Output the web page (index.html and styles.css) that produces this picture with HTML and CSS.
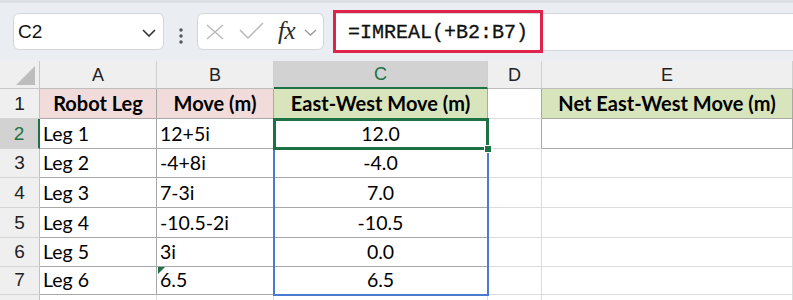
FILE: index.html
```html
<!DOCTYPE html>
<html>
<head>
<meta charset="utf-8">
<link rel="stylesheet" href="styles.css">
</head>
<body>
<div class="toolbar">
  <div class="namebox">
    <span class="name">C2</span>
    <svg class="chev" width="14" height="8" viewBox="0 0 14 8"><polyline points="1,1 7,7 13,1" fill="none" stroke="#333" stroke-width="1.6"/></svg>
  </div>
  <svg class="dots" width="6" height="16" viewBox="0 0 6 16"><circle cx="3" cy="2" r="1.7" fill="#555"/><circle cx="3" cy="8" r="1.7" fill="#555"/><circle cx="3" cy="14" r="1.7" fill="#555"/></svg>
  <div class="fxbox">
    <svg class="xicon" width="18" height="16" viewBox="0 0 18 16"><path d="M1 1 L17 15 M17 1 L1 15" stroke="#b9b9b9" stroke-width="1.5" fill="none"/></svg>
    <svg class="check" width="25" height="17" viewBox="0 0 25 17"><polyline points="1,8 9,16 24,1" fill="none" stroke="#b9b9b9" stroke-width="1.5"/></svg>
    <span class="fx">fx</span>
    <svg class="chev2" width="13" height="7" viewBox="0 0 13 7"><polyline points="1,1 6.5,6 12,1" fill="none" stroke="#9a9a9a" stroke-width="1.4"/></svg>
  </div>
  <div class="formula">
    <span class="ftext">=IMREAL(+B2:B7)</span>
    <div class="redbox"></div>
  </div>
</div>
<div class="sheet">
  <div class="grid">
    <div class="c corner"><svg width="20" height="19" viewBox="0 0 20 19"><polygon points="19,0 19,19 0,19" fill="#bdbdbd"/></svg></div>
    <div class="c ch">A</div>
    <div class="c ch">B</div>
    <div class="c ch sel">C</div>
    <div class="c ch">D</div>
    <div class="c ch">E</div>

    <div class="c rh">1</div>
    <div class="c t pink b">Robot Leg</div>
    <div class="c t pink b">Move (m)</div>
    <div class="c t green b">East-West Move (m)</div>
    <div class="c dr"></div>
    <div class="c t green b">Net East-West Move (m)</div>

    <div class="c rh rsel">2</div>
    <div class="c t">Leg 1</div>
    <div class="c t">12+5i</div>
    <div class="c t ctr">12.0</div>
    <div class="c dr"></div>
    <div class="c t"></div>

    <div class="c rh">3</div>
    <div class="c t">Leg 2</div>
    <div class="c t">-4+8i</div>
    <div class="c t ctr">-4.0</div>
    <div class="c"></div>
    <div class="c"></div>

    <div class="c rh">4</div>
    <div class="c t">Leg 3</div>
    <div class="c t">7-3i</div>
    <div class="c t ctr">7.0</div>
    <div class="c"></div>
    <div class="c"></div>

    <div class="c rh">5</div>
    <div class="c t">Leg 4</div>
    <div class="c t">-10.5-2i</div>
    <div class="c t ctr">-10.5</div>
    <div class="c"></div>
    <div class="c"></div>

    <div class="c rh">6</div>
    <div class="c t">Leg 5</div>
    <div class="c t">3i</div>
    <div class="c t ctr">0.0</div>
    <div class="c"></div>
    <div class="c"></div>

    <div class="c rh">7</div>
    <div class="c t">Leg 6</div>
    <div class="c t warn">6.5<span class="tri"></span></div>
    <div class="c t ctr">6.5</div>
    <div class="c"></div>
    <div class="c"></div>

    <div class="c rh"></div>
    <div class="c"></div>
    <div class="c"></div>
    <div class="c"></div>
    <div class="c"></div>
    <div class="c"></div>
  </div>
  <div class="range"></div>
  <div class="active"><span class="handle"></span></div>
</div>
</body>
</html>
```
FILE: styles.css
```css
* { box-sizing: border-box; }
html, body { margin: 0; padding: 0; }
body { width: 793px; height: 300px; overflow: hidden; background: #fff; font-family: Lato, "Noto Sans", sans-serif; }

.toolbar {
  height: 61px;
  background: #eaeef2;
  border-top: 3px solid #dde1e5;
  display: flex;
  align-items: flex-start;
  position: relative;
}
.namebox {
  margin: 10px 0 0 13px;
  width: 151px; height: 37px;
  background: #fff;
  border: 1px solid #d3d6da;
  border-radius: 6px;
  display: flex; align-items: center; justify-content: space-between;
  padding: 0 7px 0 4px;
}
.name { font-family: "Liberation Sans", Arial, sans-serif; font-size: 19px; color: #111; }
.chev { margin-top: 2px; }
.dots { margin: 25px 0 0 14px; }
.fxbox {
  margin: 10px 0 0 13px;
  width: 127px; height: 37px;
  background: #fff;
  border: 1px solid #d3d6da;
  border-radius: 6px;
  display: flex; align-items: center;
  padding-left: 8px;
}
.xicon { margin-top: 1px; }
.check { margin-left: 15px; margin-top: -2px; }
.fx { font-family: "Liberation Serif", "Times New Roman", serif; font-style: italic; font-size: 25px; color: #2a2a2a; margin-left: 14px; margin-top: -2px; letter-spacing: -0.5px; }
.chev2 { margin-left: 9px; margin-top: 1px; }
.formula {
  margin: 10px 0 0 9px;
  flex: 1;
  height: 38px;
  background: #fff;
  border-top: 1px solid #d3d6da;
  border-bottom: 1px solid #d3d6da;
  display: flex; align-items: center;
  padding-left: 15px;
  position: relative;
}
.ftext { font-family: "Liberation Mono", "DejaVu Sans Mono", monospace; font-size: 20px; color: #111; -webkit-text-stroke: 0.3px #111; }
.redbox {
  position: absolute;
  left: 0; top: -4px;
  width: 210px; height: 43px;
  border: 3px solid #e0234d;
}

.sheet { position: relative; }
.grid {
  display: grid;
  grid-template-columns: 40px 117px 117px 214px 54px 1fr;
  grid-template-rows: 28px 30px 30px 29px 30px 30px 29px 28px 30px;
}
.c {
  border-right: 1px solid #dcdcdc;
  border-bottom: 1px solid #dcdcdc;
  font-size: 19.5px;
  color: #000;
  display: flex; align-items: flex-end;
  padding: 0 0 3px 3px;
  white-space: nowrap;
  position: relative;
}
.corner { background: #efefef; border-color: #c8c8c8; padding: 0 3px 3px 0; justify-content: flex-end; }
.ch {
  background: #efefef;
  border-right-color: #cfcfcf;
  border-bottom-color: #bdbdbd;
  justify-content: center; padding: 0 0 2px 0;
  font-family: "Liberation Sans", Arial, sans-serif; font-size: 18px; color: #222;
}
.ch.sel { background: #d2d2d2; color: #1e7145; border-bottom: 2px solid #1e7145; }
.rh {
  background: #efefef;
  border-right-color: #c2c2c2;
  border-bottom-color: #d4d4d4;
  justify-content: center; padding: 0 0 3px 0;
  font-family: "Liberation Sans", Arial, sans-serif; font-size: 19px; color: #222;
}
.rh.rsel { background: #d2d2d2; color: #1e7145; border-right: 2px solid #1e7145; }
.t { border-right-color: #a8a8a8; border-bottom-color: #a8a8a8; }
.dr { border-right-color: #a8a8a8; }
.b { font-weight: 700; font-size: 20px; justify-content: center; padding-left: 0; }
.pink { background: #f2dcdb; }
.green { background: #d8e4bc; }
.ctr { justify-content: center; padding-left: 0; }
.tri {
  position: absolute; left: 1px; top: 0;
  width: 0; height: 0;
  border-top: 7px solid #1e7145;
  border-right: 7px solid transparent;
}

.range {
  position: absolute;
  left: 273px; top: 58px;
  width: 216px; height: 177px;
  border: 2px solid #4a7bd0;
}
.active {
  position: absolute;
  left: 273px; top: 57px;
  width: 216px; height: 32px;
  border: 3px solid #1e7145;
}
.handle {
  position: absolute;
  right: -6px; bottom: -6px;
  width: 8px; height: 8px;
  background: #1e7145;
  border: 1px solid #fff;
}
```
